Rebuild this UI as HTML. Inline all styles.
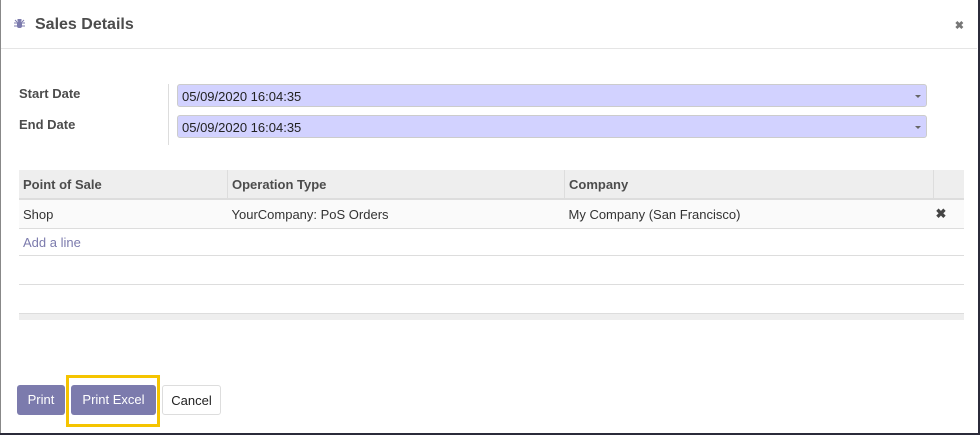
<!DOCTYPE html>
<html><head><style>
body{margin:0;width:980px;height:435px;background:#2b2b3a;font-family:"Liberation Sans",sans-serif;font-size:13px;color:#4c4c4c;overflow:hidden;position:relative}
.m{position:absolute;left:0;top:0;width:977px;height:433px;background:#fff;border-left:1px solid #888}
.hd{position:absolute;left:0;top:0;width:976px;height:48px;border-bottom:1px solid #e5e5e5}
.t{position:absolute;left:34px;top:16px;font-size:16px;font-weight:bold;color:#4c4c4c}
.x{position:absolute;right:13px;top:19px;font-size:11px;font-weight:bold;color:#777}
.lbl{position:absolute;left:18px;font-weight:bold;color:#4c4c4c}
.inp{position:absolute;left:176px;width:750px;height:23px;background:#d2d2ff;border:1px solid #ccc;border-radius:3px;box-sizing:border-box;padding:5px 4px;color:#222;font-size:13px;line-height:13px}
.inp:after{content:"";position:absolute;right:5px;top:10px;border:3px solid transparent;border-top:3px solid #666}
.vl{position:absolute;left:167px;top:84px;width:1px;height:61px;background:#ddd}
table{position:absolute;left:18px;top:170px;width:945px;border-collapse:collapse}
td,th{text-align:left;padding:0 4px;font-size:13px}
th{background:#eee;height:28px;border-left:1px solid #ddd;border-bottom:2px solid #ddd;color:#4c4c4c}
th:first-child{border-left:none}
td{height:28px;border-bottom:1px solid #ddd;color:#333}
.b{position:absolute;top:385px;height:30px;border-radius:3px;box-sizing:border-box;font-size:13px;line-height:30px;text-align:center}
.p{background:#7c7bad;color:#fff}
</style></head><body>
<div class="m">
<div class="hd">
<svg style="position:absolute;left:13px;top:18px" width="11" height="11" viewBox="0 0 11 11"><rect x="3" y="3" width="5" height="7" rx="2" fill="#7c7bad"/><rect x="3.5" y="1" width="4" height="2" fill="#7c7bad"/><path d="M0 5h11M0 8h11M1 2l2 2M10 2l-2 2" stroke="#7c7bad" stroke-width="1"/></svg>
<div class="t">Sales Details</div>
<div class="x">✖</div>
</div>
<div class="lbl" style="top:86px">Start Date</div>
<div class="lbl" style="top:117px">End Date</div>
<div class="vl"></div>
<div class="inp" style="top:84px">05/09/2020 16:04:35</div>
<div class="inp" style="top:115px">05/09/2020 16:04:35</div>
<table>
<tr><th style="width:200px">Point of Sale</th><th style="width:328px">Operation Type</th><th style="width:360px">Company</th><th></th></tr>
<tr style="background:#fafafa"><td>Shop</td><td>YourCompany: PoS Orders</td><td>My Company (San Francisco)</td><td style="font-weight:bold;color:#444;padding-left:2px">✖</td></tr>
<tr><td colspan="4" style="color:#7c7bad;height:26px">Add a line</td></tr>
<tr><td colspan="4"></td></tr>
<tr><td colspan="4"></td></tr>
<tr><td colspan="4" style="background:#eee;height:6px;border-bottom:none"></td></tr>
</table>
<div style="position:absolute;left:65px;top:375px;width:88px;height:46px;border:3px solid #f5c400"></div>
<div class="b p" style="left:16px;width:48px">Print</div>
<div class="b p" style="left:70px;width:85px">Print Excel</div>
<div class="b" style="left:161px;width:59px;border:1px solid #ddd;color:#222">Cancel</div>
</div>
</body></html>
